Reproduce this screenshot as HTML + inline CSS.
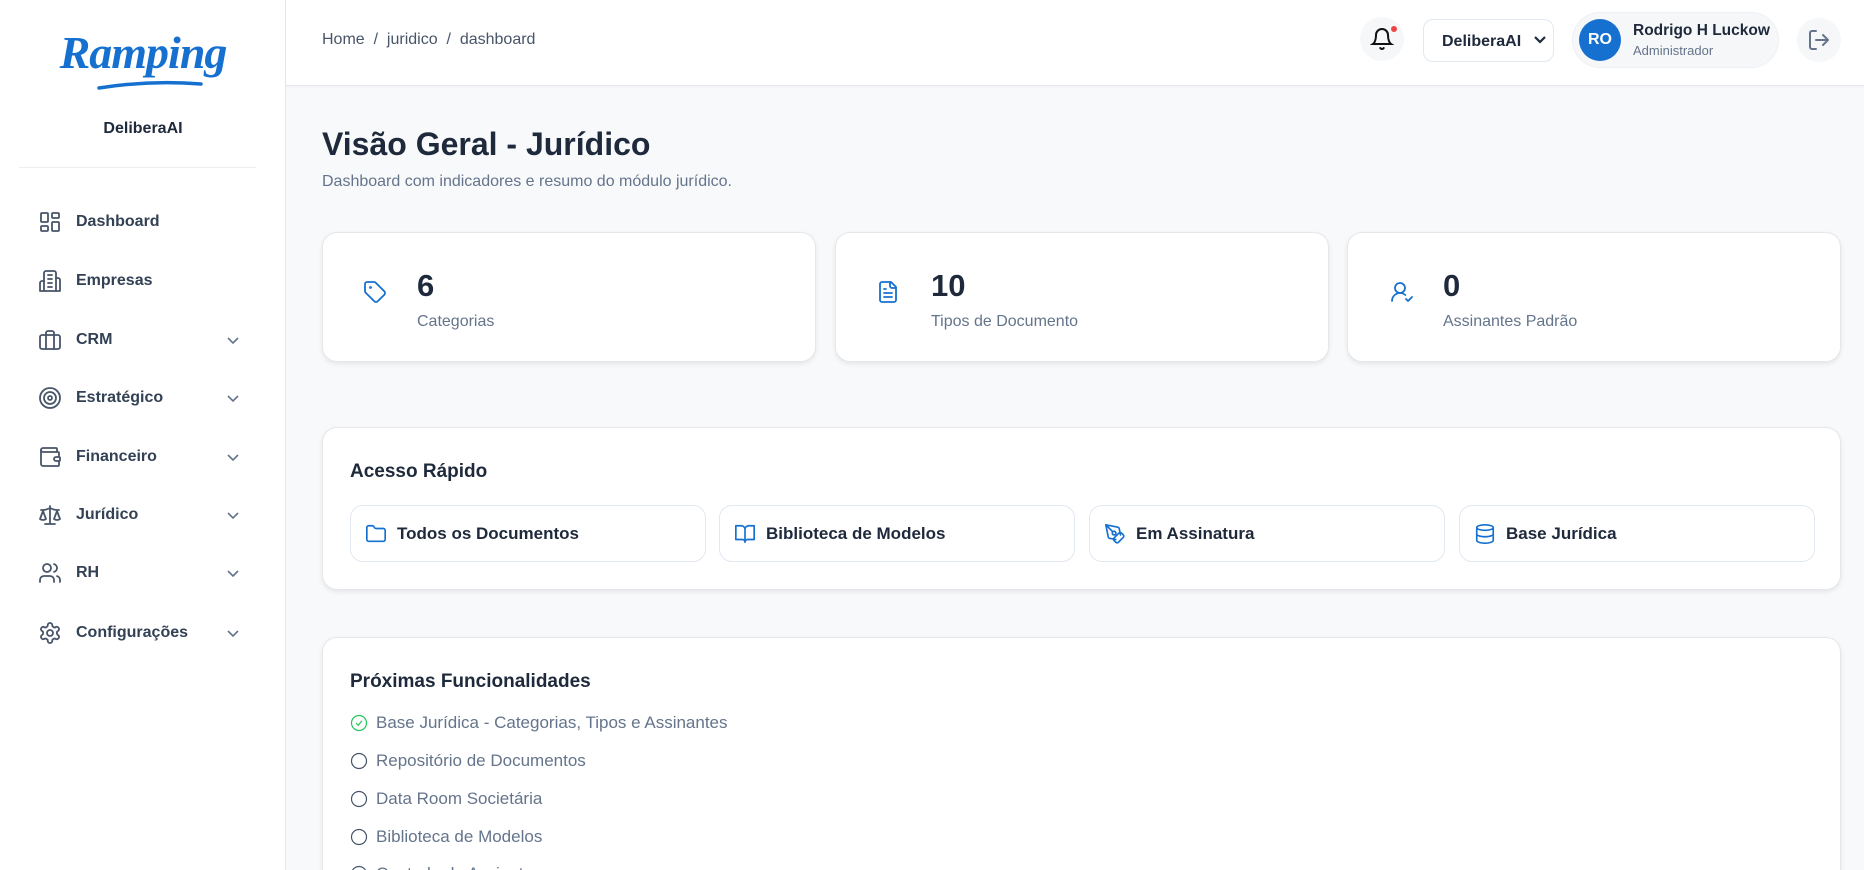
<!DOCTYPE html>
<html><head><meta charset="utf-8"><style>
*{box-sizing:border-box;margin:0;padding:0}
html,body{width:1864px;height:870px;overflow:hidden}
body{background:#f8f9fb;font-family:"Liberation Sans",sans-serif;color:#1e293b;position:relative}
#wrap{position:absolute;left:0;top:0;width:1864px;height:870px;overflow:hidden}
.sb{position:absolute;left:0;top:0;width:286px;height:870px;background:#fff;border-right:1px solid #e5e7eb}
.logo{position:absolute;left:0;width:286px;top:26px;text-align:center;font-family:"Liberation Serif",serif;font-style:italic;font-weight:bold;font-size:46px;color:#1570cf;letter-spacing:-1px}
.brand{position:absolute;top:120px;width:286px;text-align:center;font-size:16px;font-weight:bold;color:#1e293b}
.div{position:absolute;left:19px;width:237px;top:167px;border-top:1px solid #eceef2}
.nav{position:absolute;left:38px;height:24px;display:flex;align-items:center;font-size:16px;color:#334155;font-weight:bold}
.nav svg{width:24px;height:24px;margin-right:14px;stroke:#475569;fill:none;stroke-width:1.8;stroke-linecap:round;stroke-linejoin:round}
.chev{position:absolute;left:226px;width:14px;height:14px;stroke:#64748b;fill:none;stroke-width:1.6}
.hdr{position:absolute;left:286px;top:0;right:0;height:86px;background:#fff;border-bottom:1px solid #e5e7eb;box-shadow:0 1px 3px rgba(0,0,0,.04)}
.bc{position:absolute;left:322px;top:31px;font-size:16px;color:#475569}
.card{position:absolute;background:#fff;border:1px solid #e5e7eb;border-radius:15px;box-shadow:0 2px 5px rgba(0,0,0,.08)}
.num{position:absolute;font-size:31px;font-weight:bold;color:#1e293b}
.lab{position:absolute;font-size:16px;color:#64748b}
.ic{stroke:#1570cf;fill:none;stroke-width:1.8;stroke-linecap:round;stroke-linejoin:round}
.btn{position:absolute;top:505px;height:57px;width:356px;border:1px solid #e2e8f0;border-radius:13px;display:flex;align-items:center;padding-left:14px;font-size:17px;font-weight:bold;color:#1e293b}
.btn svg{width:22px;height:22px;margin-right:10px}
.li{position:absolute;left:350px;font-size:17px;color:#64748b;display:flex;align-items:center}
.li svg{width:18px;height:18px;margin-right:8px;fill:none;stroke:#475569;stroke-width:1.6}
</style></head><body><div id="wrap">
<div class="sb">
<div class="logo">Ramping</div>
<svg style="position:absolute;left:95px;top:78px" width="110" height="14" viewBox="0 0 110 14" fill="none" stroke="#1570cf" stroke-width="3.5" stroke-linecap="round"><path d="M4 10 Q55 2 106 6"/></svg>
<div class="brand">DeliberaAI</div>
<div class="div"></div>
<div class="nav" style="top:210px"><svg viewBox="0 0 24 24"><rect x="3" y="3" width="7" height="9" rx="1"/><rect x="14" y="3" width="7" height="5" rx="1"/><rect x="14" y="12" width="7" height="9" rx="1"/><rect x="3" y="16" width="7" height="5" rx="1"/></svg>Dashboard</div>
<div class="nav" style="top:269px"><svg viewBox="0 0 24 24"><path d="M6 22V4a2 2 0 0 1 2-2h8a2 2 0 0 1 2 2v18Z"/><path d="M6 12H4a2 2 0 0 0-2 2v8h4M18 9h2a2 2 0 0 1 2 2v11h-4M10 6h4M10 10h4M10 14h4M10 18h4"/></svg>Empresas</div>
<div class="nav" style="top:328px"><svg viewBox="0 0 24 24"><rect x="2" y="7" width="20" height="14" rx="2"/><path d="M16 21V5a2 2 0 0 0-2-2h-4a2 2 0 0 0-2 2v16"/></svg>CRM</div>
<div class="nav" style="top:386px"><svg viewBox="0 0 24 24"><circle cx="12" cy="12" r="10"/><circle cx="12" cy="12" r="6"/><circle cx="12" cy="12" r="2"/></svg>Estratégico</div>
<div class="nav" style="top:445px"><svg viewBox="0 0 24 24"><path d="M19 7V4a1 1 0 0 0-1-1H5a2 2 0 0 0 0 4h15a1 1 0 0 1 1 1v4h-3a2 2 0 0 0 0 4h3a1 1 0 0 0 1-1v-2a1 1 0 0 0-1-1"/><path d="M3 5v14a2 2 0 0 0 2 2h15a1 1 0 0 0 1-1v-4"/></svg>Financeiro</div>
<div class="nav" style="top:503px"><svg viewBox="0 0 24 24"><path d="m16 16 3-8 3 8c-.87.65-1.920 1-3 1s-2.13-.35-3-1ZM2 16l3-8 3 8c-.87.65-1.92 1-3 1s-2.13-.35-3-1ZM7 21h10M12 3v18M3 7h2c2 0 5-1 7-2 2 1 5 2 7 2h2"/></svg>Jurídico</div>
<div class="nav" style="top:561px"><svg viewBox="0 0 24 24"><path d="M16 21v-2a4 4 0 0 0-4-4H6a4 4 0 0 0-4 4v2"/><circle cx="9" cy="7" r="4"/><path d="M22 21v-2a4 4 0 0 0-3-3.87M16 3.13a4 4 0 0 1 0 7.75"/></svg>RH</div>
<div class="nav" style="top:621px"><svg viewBox="0 0 24 24"><path d="M12.22 2h-.44a2 2 0 0 0-2 2v.18a2 2 0 0 1-1 1.730l-.43.25a2 2 0 0 1-2 0l-.15-.08a2 2 0 0 0-2.73.73l-.22.38a2 2 0 0 0 .73 2.73l.15.1a2 2 0 0 1 1 1.72v.51a2 2 0 0 1-1 1.74l-.15.09a2 2 0 0 0-.73 2.73l.22.38a2 2 0 0 0 2.73.73l.15-.08a2 2 0 0 1 2 0l.43.25a2 2 0 0 1 1 1.73V20a2 2 0 0 0 2 2h.44a2 2 0 0 0 2-2v-.18a2 2 0 0 1 1-1.73l.43-.25a2 2 0 0 1 2 0l.15.08a2 2 0 0 0 2.73-.73l.22-.39a2 2 0 0 0-.73-2.73l-.15-.08a2 2 0 0 1-1-1.74v-.5a2 2 0 0 1 1-1.74l.15-.09a2 2 0 0 0 .73-2.73l-.22-.38a2 2 0 0 0-2.73-.73l-.15.08a2 2 0 0 1-2 0l-.43-.25a2 2 0 0 1-1-1.73V4a2 2 0 0 0-2-2z"/><circle cx="12" cy="12" r="3"/></svg>Configurações</div>
<svg class="chev" style="top:333px" viewBox="0 0 14 14"><path d="M2 5l5 5 5-5"/></svg>
<svg class="chev" style="top:391px" viewBox="0 0 14 14"><path d="M2 5l5 5 5-5"/></svg>
<svg class="chev" style="top:450px" viewBox="0 0 14 14"><path d="M2 5l5 5 5-5"/></svg>
<svg class="chev" style="top:508px" viewBox="0 0 14 14"><path d="M2 5l5 5 5-5"/></svg>
<svg class="chev" style="top:566px" viewBox="0 0 14 14"><path d="M2 5l5 5 5-5"/></svg>
<svg class="chev" style="top:626px" viewBox="0 0 14 14"><path d="M2 5l5 5 5-5"/></svg>
</div>
<div class="hdr"></div>
<div class="bc">Home &nbsp;/&nbsp; juridico &nbsp;/&nbsp; dashboard</div>
<div style="position:absolute;left:1360px;top:17px;width:44px;height:44px;border-radius:50%;background:#f6f7f9"></div>
<svg style="position:absolute;left:1370px;top:26px" width="24" height="26" viewBox="0 0 24 24" fill="none" stroke="#111" stroke-width="2" stroke-linecap="round"><path d="M6 8a6 6 0 0 1 12 0c0 7 3 9 3 9H3s3-2 3-9M10.3 21a1.94 1.94 0 0 0 3.4 0"/></svg>
<div style="position:absolute;left:1391px;top:26px;width:6px;height:6px;border-radius:50%;background:#ef4444"></div>
<div style="position:absolute;left:1423px;top:19px;width:131px;height:43px;border:1px solid #e2e8f0;border-radius:10px;font-size:16px;font-weight:bold;padding:13px 0 0 18px;color:#1e293b">DeliberaAI</div>
<svg style="position:absolute;left:1533px;top:34px" width="14" height="12" viewBox="0 0 14 12" fill="none" stroke="#1e293b" stroke-width="2.2"><path d="M2 3l5 5 5-5"/></svg>
<div style="position:absolute;left:1572px;top:12px;width:207px;height:56px;border-radius:28px;background:#f6f7f9;border:1px solid #eef0f3"></div>
<div style="position:absolute;left:1579px;top:19px;width:42px;height:42px;border-radius:50%;background:#1570cf;color:#fff;font-weight:bold;font-size:16px;text-align:center;line-height:42px">RO</div>
<div style="position:absolute;left:1633px;top:22px;font-size:15.5px;font-weight:bold;color:#1e293b">Rodrigo H Luckow</div>
<div style="position:absolute;left:1633px;top:43px;font-size:13px;color:#64748b">Administrador</div>
<div style="position:absolute;left:1797px;top:18px;width:44px;height:44px;border-radius:50%;background:#f6f7f9"></div>
<svg style="position:absolute;left:1807px;top:28px" width="24" height="24" viewBox="0 0 24 24" fill="none" stroke="#64748b" stroke-width="2" stroke-linecap="round" stroke-linejoin="round"><path d="M9 21H5a2 2 0 0 1-2-2V5a2 2 0 0 1 2-2h4M16 17l5-5-5-5M21 12H9"/></svg>

<div style="position:absolute;left:322px;top:126px;font-size:32px;font-weight:bold;color:#1e293b">Visão Geral - Jurídico</div>
<div style="position:absolute;left:322px;top:173px;font-size:16px;color:#64748b">Dashboard com indicadores e resumo do módulo jurídico.</div>

<div class="card" style="left:322px;top:232px;width:494px;height:130px"></div>
<div class="card" style="left:835px;top:232px;width:494px;height:130px"></div>
<div class="card" style="left:1347px;top:232px;width:494px;height:130px"></div>
<svg class="ic" style="position:absolute;left:363px;top:280px" width="24" height="24" viewBox="0 0 24 24"><path d="M12.6 2.6A2 2 0 0 0 11.2 2H4a2 2 0 0 0-2 2v7.2a2 2 0 0 0 .6 1.4l8.7 8.7a2.4 2.4 0 0 0 3.4 0l6.6-6.6a2.4 2.4 0 0 0 0-3.4z"/><circle cx="7.5" cy="7.5" r=".5" fill="#1570cf"/></svg>
<div class="num" style="left:417px;top:268px">6</div><div class="lab" style="left:417px;top:313px">Categorias</div>
<svg class="ic" style="position:absolute;left:876px;top:280px" width="24" height="24" viewBox="0 0 24 24"><path d="M15 2H6a2 2 0 0 0-2 2v16a2 2 0 0 0 2 2h12a2 2 0 0 0 2-2V7Z"/><path d="M14 2v4a2 2 0 0 0 2 2h4M10 9H8M16 13H8M16 17H8"/></svg>
<div class="num" style="left:931px;top:268px">10</div><div class="lab" style="left:931px;top:313px">Tipos de Documento</div>
<svg class="ic" style="position:absolute;left:1389px;top:280px" width="26" height="24" viewBox="0 0 24 24"><path d="M2 21a8 8 0 0 1 13.3-6"/><circle cx="10" cy="8" r="5"/><path d="m16 19 2 2 4-4"/></svg>
<div class="num" style="left:1443px;top:268px">0</div><div class="lab" style="left:1443px;top:313px">Assinantes Padrão</div>

<div class="card" style="left:322px;top:427px;width:1519px;height:163px"></div>
<div style="position:absolute;left:350px;top:461px;font-size:19px;font-weight:bold;color:#1e293b">Acesso Rápido</div>
<div class="btn" style="left:350px"><svg class="ic" viewBox="0 0 24 24"><path d="M20 20a2 2 0 0 0 2-2V8a2 2 0 0 0-2-2h-7.9a2 2 0 0 1-1.69-.9L9.6 3.9A2 2 0 0 0 7.93 3H4a2 2 0 0 0-2 2v13a2 2 0 0 0 2 2Z"/></svg>Todos os Documentos</div>
<div class="btn" style="left:719px"><svg class="ic" viewBox="0 0 24 24"><path d="M2 3h6a4 4 0 0 1 4 4v14a3 3 0 0 0-3-3H2zM22 3h-6a4 4 0 0 0-4 4v14a3 3 0 0 1 3-3h7z"/></svg>Biblioteca de Modelos</div>
<div class="btn" style="left:1089px"><svg class="ic" viewBox="0 0 24 24"><path d="M15.7 21a2 2 0 0 1-2.8 0l-1.9-1.9a2 2 0 0 1 0-2.8l5.3-5.3a2 2 0 0 1 2.8 0l1.9 1.9a2 2 0 0 1 0 2.8z"/><path d="m18 13-1.4-6.9a2 2 0 0 0-1.5-1.5L2 2l2.6 13.2a2 2 0 0 0 1.5 1.5L13 18M2.3 2.3l7.3 7.3"/><circle cx="11" cy="11" r="2"/></svg>Em Assinatura</div>
<div class="btn" style="left:1459px"><svg class="ic" viewBox="0 0 24 24"><ellipse cx="12" cy="5" rx="9" ry="3"/><path d="M3 5v14a9 3 0 0 0 18 0V5M3 12a9 3 0 0 0 18 0"/></svg>Base Jurídica</div>

<div class="card" style="left:322px;top:637px;width:1519px;height:260px"></div>
<div style="position:absolute;left:350px;top:671px;font-size:19px;font-weight:bold;color:#1e293b">Próximas Funcionalidades</div>
<div class="li" style="top:713px"><svg viewBox="0 0 24 24" style="stroke:#22c55e"><circle cx="12" cy="12" r="10"/><path d="m8 12 3 3 5-6"/></svg>Base Jurídica - Categorias, Tipos e Assinantes</div>
<div class="li" style="top:751px"><svg viewBox="0 0 24 24"><circle cx="12" cy="12" r="10"/></svg>Repositório de Documentos</div>
<div class="li" style="top:789px"><svg viewBox="0 0 24 24"><circle cx="12" cy="12" r="10"/></svg>Data Room Societária</div>
<div class="li" style="top:827px"><svg viewBox="0 0 24 24"><circle cx="12" cy="12" r="10"/></svg>Biblioteca de Modelos</div>
<div class="li" style="top:864px"><svg viewBox="0 0 24 24"><circle cx="12" cy="12" r="10"/></svg>Controle de Assinaturas</div>
</div></body></html>
